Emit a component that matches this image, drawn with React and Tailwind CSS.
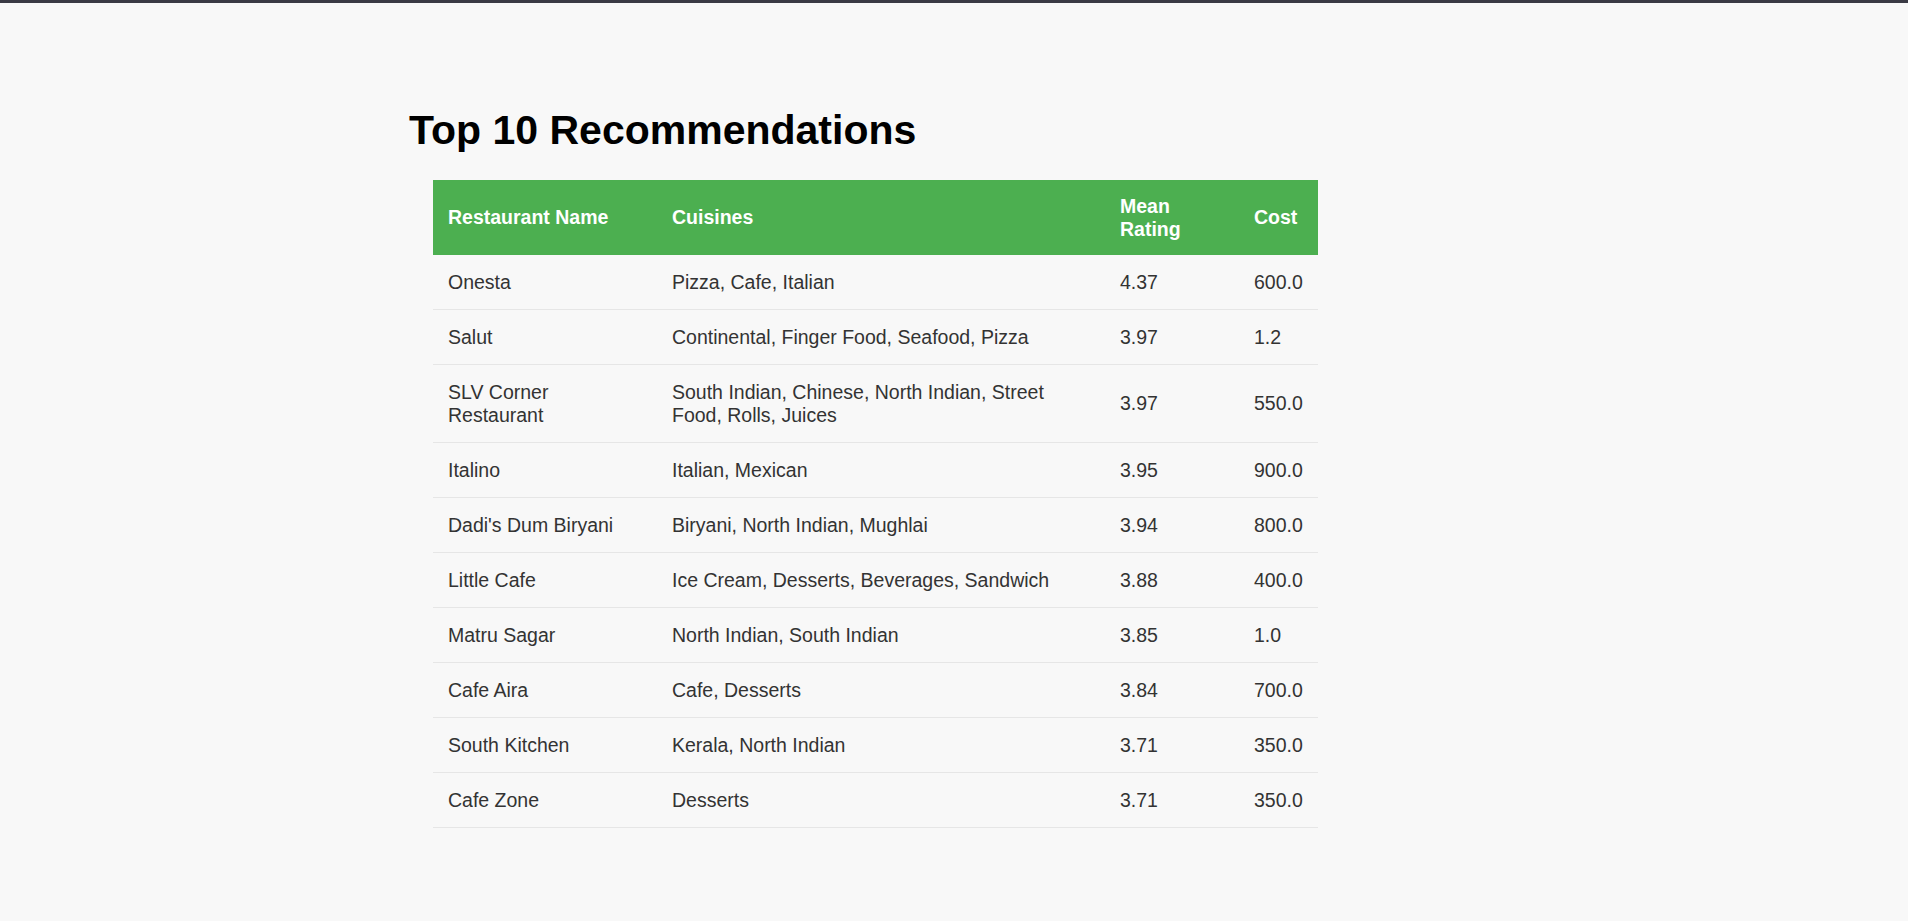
export default function App() {
  const rows = [
    ["Onesta", "Pizza, Cafe, Italian", "4.37", "600.0"],
    ["Salut", "Continental, Finger Food, Seafood, Pizza", "3.97", "1.2"],
    ["SLV Corner Restaurant", "South Indian, Chinese, North Indian, Street Food, Rolls, Juices", "3.97", "550.0"],
    ["Italino", "Italian, Mexican", "3.95", "900.0"],
    ["Dadi's Dum Biryani", "Biryani, North Indian, Mughlai", "3.94", "800.0"],
    ["Little Cafe", "Ice Cream, Desserts, Beverages, Sandwich", "3.88", "400.0"],
    ["Matru Sagar", "North Indian, South Indian", "3.85", "1.0"],
    ["Cafe Aira", "Cafe, Desserts", "3.84", "700.0"],
    ["South Kitchen", "Kerala, North Indian", "3.71", "350.0"],
    ["Cafe Zone", "Desserts", "3.71", "350.0"],
  ];
  return (
    <div className="w-[1908px] h-[921px] bg-[#f8f8f8] border-t-[3px] border-[#3a3a44] overflow-hidden" style={{ fontFamily: '"Liberation Sans", Arial, sans-serif' }}>
      <div className="pl-[409px] pt-[102px]">
        <h1 className="text-[41px] font-bold text-black leading-[50px]">Top 10 Recommendations</h1>
        <table className="ml-[24px] mt-[25px] w-[885px] border-collapse text-[19.5px] leading-[23px] text-[#333]">
          <colgroup>
            <col className="w-[224px]" />
            <col className="w-[448px]" />
            <col className="w-[134px]" />
            <col className="w-[79px]" />
          </colgroup>
          <thead>
            <tr className="bg-[#4caf50] text-white h-[75px]">
              <th className="text-left font-bold px-[15px] py-[14px]">Restaurant Name</th>
              <th className="text-left font-bold px-[15px] py-[14px]">Cuisines</th>
              <th className="text-left font-bold px-[15px] py-[14px]">Mean<br />Rating</th>
              <th className="text-left font-bold px-[15px] py-[14px]">Cost</th>
            </tr>
          </thead>
          <tbody>
            {rows.map((r, i) => (
              <tr key={i} className="border-b border-[#e6e6e6]">
                {r.map((c, j) => (
                  <td key={j} className="px-[15px] py-[15.5px] align-middle">{c}</td>
                ))}
              </tr>
            ))}
          </tbody>
        </table>
      </div>
    </div>
  );
}
